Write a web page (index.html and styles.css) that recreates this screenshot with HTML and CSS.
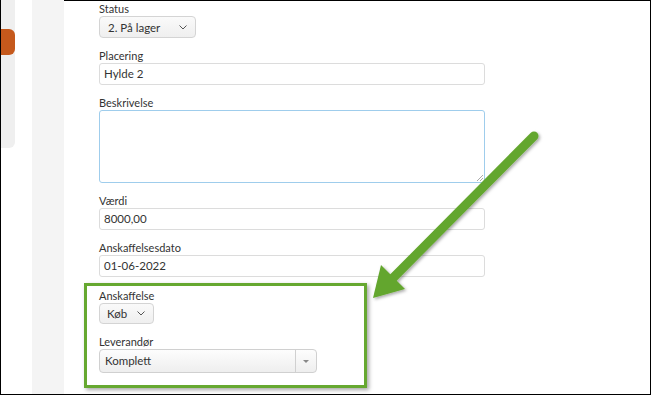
FILE: index.html
```html
<!DOCTYPE html>
<html lang="da">
<head>
<meta charset="utf-8">
<title>Udstyr</title>
<link rel="stylesheet" href="styles.css">
</head>
<body>
<div class="frame">
  <aside class="sidebar">
    <div class="sidepanel"><div class="tab"></div></div>
  </aside>
  <div class="spacer"></div>
  <div class="stripe"></div>
  <main class="main">
    <form class="form">
      <div class="field">
        <label class="label">Status</label>
        <div class="select select-status"><span>2. På lager</span><svg class="chev" width="8" height="5" viewBox="0 0 8 5"><path d="M0.5 0.5L4 4L7.5 0.5" fill="none" stroke="#555" stroke-width="1"/></svg></div>
      </div>
      <div class="field">
        <label class="label">Placering</label>
        <div class="input">Hylde 2</div>
      </div>
      <div class="field">
        <label class="label">Beskrivelse</label>
        <div class="textarea"><svg class="grip" width="6" height="6" viewBox="0 0 6 6"><path d="M6 0L0 6M6 3L3 6" stroke="#aaa" stroke-width="1"/></svg></div>
      </div>
      <div class="field">
        <label class="label">Værdi</label>
        <div class="input">8000,00</div>
      </div>
      <div class="field">
        <label class="label">Anskaffelsesdato</label>
        <div class="input">01-06-2022</div>
      </div>
      <div class="highlight">
        <div class="field">
          <label class="label">Anskaffelse</label>
          <div class="select select-small"><span>Køb</span><svg class="chev" width="8" height="5" viewBox="0 0 8 5"><path d="M0.5 0.5L4 4L7.5 0.5" fill="none" stroke="#555" stroke-width="1"/></svg></div>
        </div>
        <div class="field last">
          <label class="label">Leverandør</label>
          <div class="select2"><span class="s2-text">Komplett</span><span class="s2-arrow"><svg width="6" height="3" viewBox="0 0 6 3"><path d="M0 0H6L3 3Z" fill="#888"/></svg></span></div>
        </div>
      </div>
    </form>
  </main>
  <svg class="arrow" width="652" height="396" viewBox="0 0 652 396">
    <defs>
      <filter id="sh" x="-20%" y="-20%" width="140%" height="140%">
        <feDropShadow dx="1.5" dy="1.5" stdDeviation="1.5" flood-color="#000" flood-opacity="0.35"/>
      </filter>
    </defs>
    <g filter="url(#sh)">
      <path d="M534 136L390 281" fill="none" stroke="#63a62e" stroke-width="9" stroke-linecap="round"/>
      <path d="M373 298L381 265L405 289Z" fill="#63a62e"/>
    </g>
  </svg>
</div>
</body>
</html>
```
FILE: styles.css
```css
html, body {
  margin: 0;
  padding: 0;
  background: #fff;
}
body {
  width: 652px;
  height: 396px;
  overflow: hidden;
  font-family: Lato, "Open Sans", sans-serif;
  color: #333;
}
.frame {
  position: relative;
  box-sizing: border-box;
  width: 651px;
  height: 395px;
  border-left: 1px solid #000;
  border-right: 1px solid #000;
  border-bottom: 1px solid #000;
  display: flex;
  overflow: hidden;
}
.frame::before {
  content: "";
  position: absolute;
  left: 63px;
  right: 0;
  top: 0;
  height: 1px;
  background: #000;
}
.sidebar {
  width: 14px;
  flex: none;
}
.sidepanel {
  height: 148px;
  background: #efefef;
  border-bottom-right-radius: 6px;
  padding-top: 29px;
  box-sizing: border-box;
}
.tab {
  height: 26px;
  background: #c5591c;
  border-radius: 0 6px 6px 0;
}
.spacer {
  width: 17px;
  flex: none;
}
.stripe {
  width: 32px;
  flex: none;
  background: #f4f4f4;
}
.main {
  flex: 1;
  padding: 2px 0 0 35px;
}
.form {
  width: 386px;
}
.field {
  margin-bottom: 11px;
}
.field.last {
  margin-bottom: 0;
}
.label {
  display: block;
  font-size: 11px;
  line-height: 14px;
  color: #333;
}
.input {
  box-sizing: border-box;
  height: 22px;
  border: 1px solid #dcdcdc;
  border-radius: 3px;
  padding: 0 4px;
  font-size: 11.5px;
  line-height: 20px;
  color: #333;
  background: #fff;
}
.textarea {
  position: relative;
  box-sizing: border-box;
  height: 73px;
  border: 1px solid #9fcdec;
  border-radius: 3px;
  background: #fff;
}
.grip {
  position: absolute;
  right: 1px;
  bottom: 1px;
  display: block;
}
.select {
  box-sizing: border-box;
  display: flex;
  align-items: center;
  justify-content: space-between;
  height: 22px;
  border: 1px solid #d4d4d4;
  border-radius: 4px;
  background: linear-gradient(#fafafa, #efefef);
  padding: 0 8px 0 8px;
  font-size: 11.5px;
  color: #333;
}
.select-status {
  width: 97px;
}
.select-small {
  width: 55px;
  height: 21px;
  padding-left: 7px;
}
.chev {
  display: block;
  flex: none;
}
.select2 {
  box-sizing: border-box;
  display: flex;
  width: 218px;
  height: 24px;
  border: 1px solid #d0d0d0;
  border-radius: 4px;
  background: linear-gradient(#fdfdfd, #eeeeee);
  font-size: 11.5px;
  color: #333;
}
.s2-text {
  flex: 1;
  padding-left: 5px;
  line-height: 22px;
}
.s2-arrow {
  width: 20px;
  border-left: 1px solid #d0d0d0;
  display: flex;
  align-items: center;
  justify-content: center;
}
.s2-arrow svg {
  display: block;
}
.highlight {
  box-sizing: border-box;
  width: 283px;
  margin: -5px 0 0 -15px;
  border: 3px solid #66a830;
  padding: 3px 12px 12px 12px;
  box-shadow: 2px 2px 4px rgba(0, 0, 0, 0.35);
}
.arrow {
  position: absolute;
  left: -1px;
  top: 0;
  pointer-events: none;
}
```
